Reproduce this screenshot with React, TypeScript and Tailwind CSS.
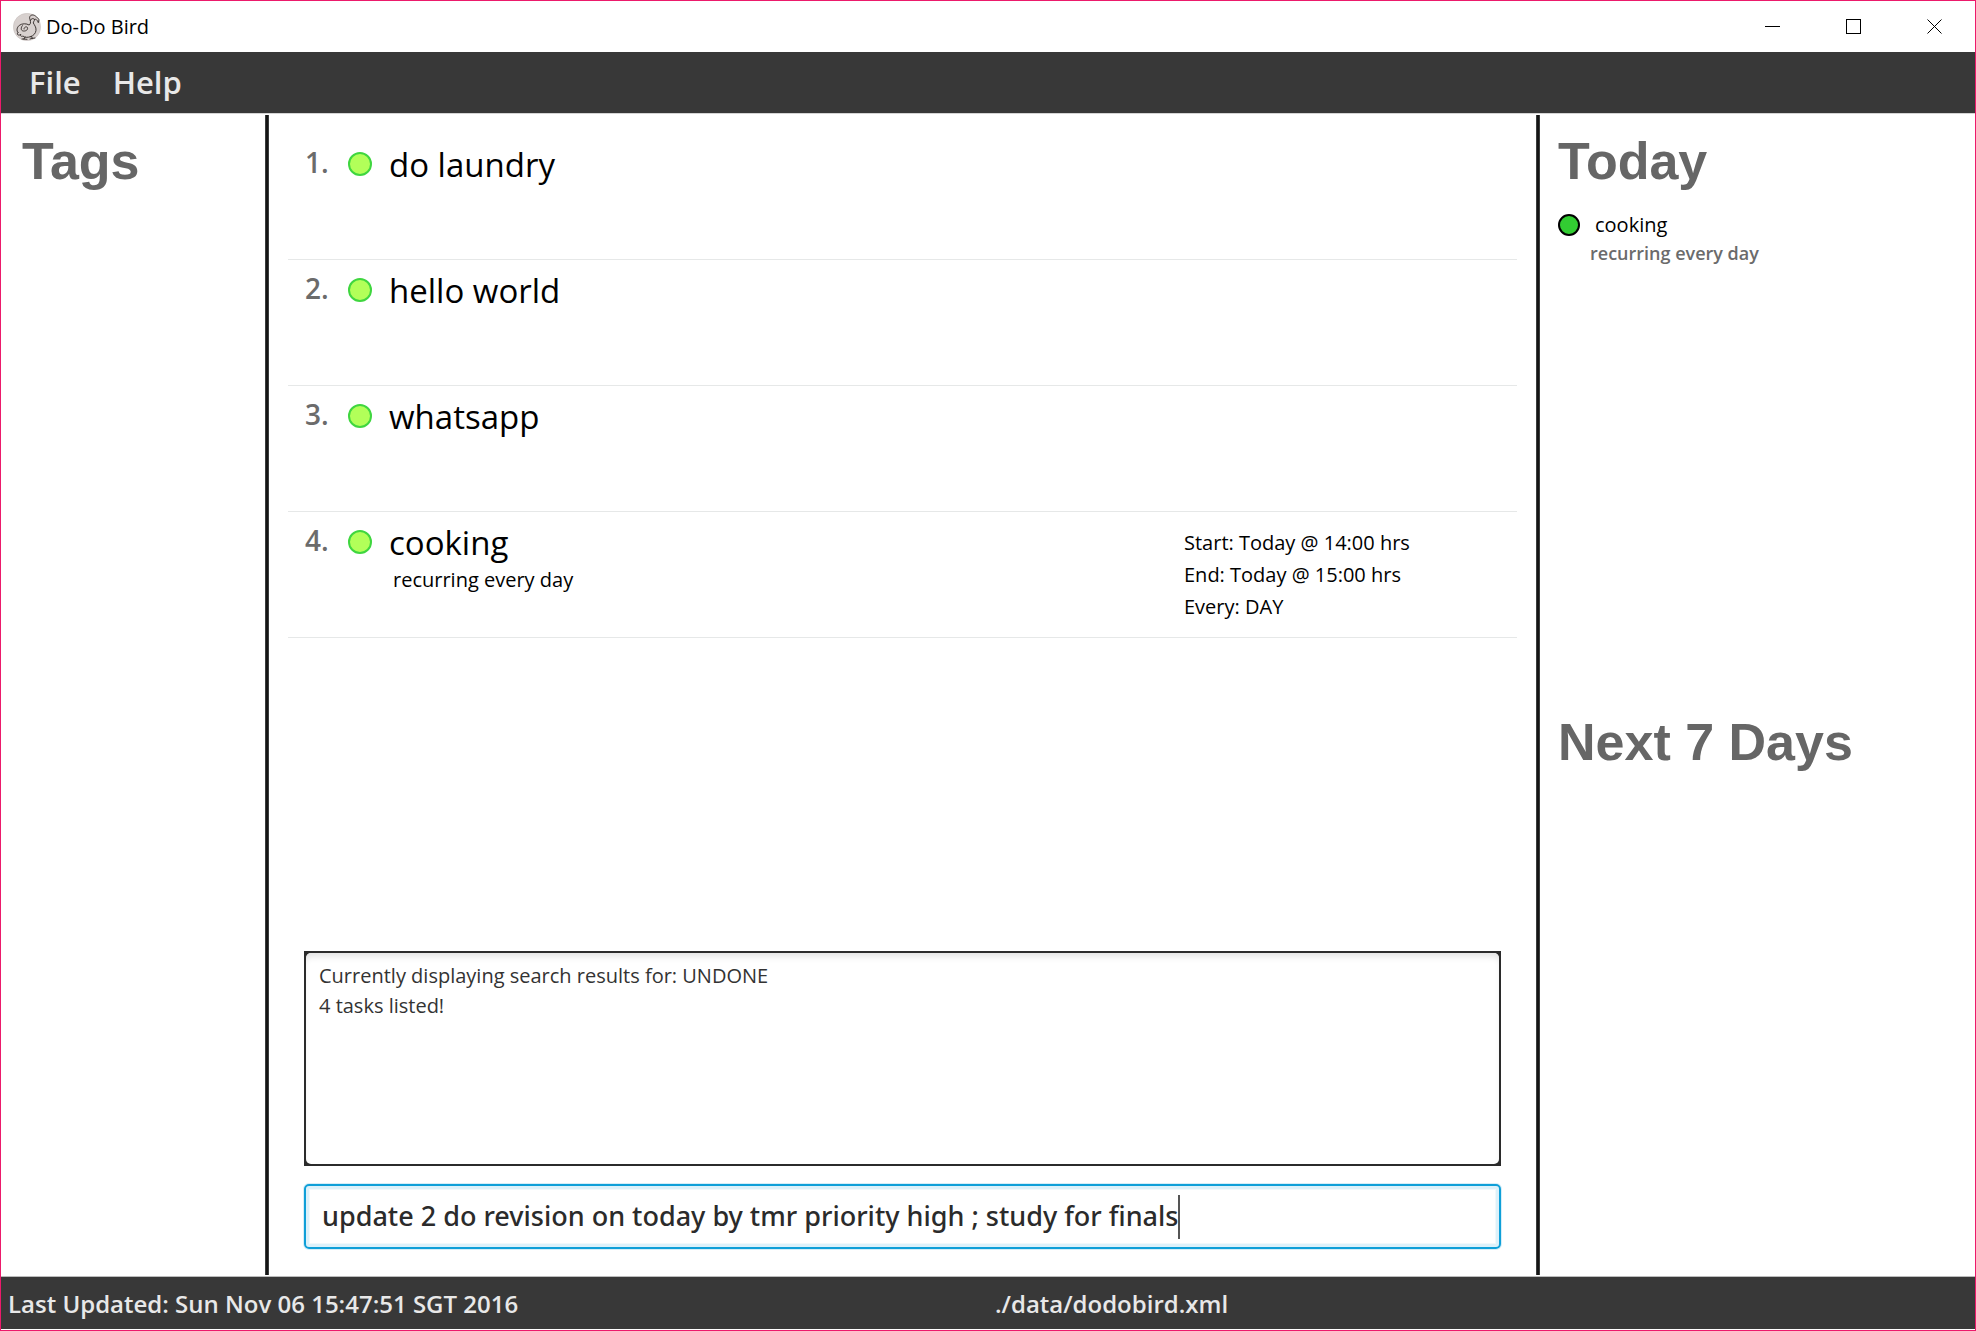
import type { ReactNode } from "react";

type Task = { title: string; note?: string; times?: string[] };

const tasks: Task[] = [
  { title: "do laundry" },
  { title: "hello world" },
  { title: "whatsapp" },
  {
    title: "cooking",
    note: "recurring every day",
    times: ["Start: Today @ 14:00 hrs", "End: Today @ 15:00 hrs", "Every: DAY"],
  },
];

function DodoLogo() {
  return (
    <svg className="size-7 shrink-0" viewBox="0 0 84 84" fill="none" aria-hidden="true">
      <circle cx="42" cy="42" r="41" fill="#d8d1cf" stroke="#c4bdbb" strokeWidth="1.5" />
      <g stroke="#3d3634" strokeWidth="3" strokeLinecap="round" strokeLinejoin="round">
        <path d="M52 22C46 12 52 5 61 6C67 7 70 12 73 14C78 17 80 22 76 28" />
        <path d="M52 22C55 16 61 15 64 19C66 23 60 26 61 30C64 36 70 42 69 52C68 61 62 68 53 71" />
        <path d="M64 19C69 17 72 20 76 28" />
        <path d="M52 22C53 29 53 34 48 36C41 31 27 31 19 37C11 44 10 53 15 59" />
        <path d="M28 38C23 44 23 53 31 54C40 55 46 49 43 43C39 39 32 44 33 48" />
        <path d="M15 59C12 60 12 65 16 66C19 67 23 65 24 63C20 68 25 72 30 69C34 74 44 74 53 71" />
        <path d="M36 72L33 78M33 78H27M33 78L42 79M55 70L58 76M58 76L66 75M58 76L51 78" />
      </g>
    </svg>
  );
}

function WindowButton({ label, children }: { label: string; children: ReactNode }) {
  return (
    <button type="button" aria-label={label} className="flex h-full w-[81px] items-center justify-center">
      <svg className="size-[15px]" viewBox="0 0 15 15" fill="none" stroke="#000" aria-hidden="true">
        {children}
      </svg>
    </button>
  );
}

function Heading({ children }: { children: ReactNode }) {
  return (
    <h2 className="pb-0.5 font-['Liberation_Sans',Arial,sans-serif] text-[52px] leading-[58px] font-bold text-[#666]">
      {children}
    </h2>
  );
}

function Divider() {
  return <div className="my-px border-x border-[#3a3d3d] bg-[#151515]" />;
}

function TaskRow({ task, index }: { task: Task; index: number }) {
  return (
    <li className="flex h-[126px] border-b border-[#e6e8e8] pt-2 pl-[17px]">
      <span className="w-[43px] text-[28px] leading-10 font-semibold text-[#6b6b6b]">{index}.</span>
      <span className="flex h-11 items-center">
        <span className="size-6 rounded-full border-2 border-[#3fd63f] bg-[#b2ff59]" />
      </span>
      <div className="min-w-0 flex-1 pl-[17px]">
        <p className="text-[33px] leading-[46px]">{task.title}</p>
        {task.note && <p className="pl-1 text-[20px] leading-7">{task.note}</p>}
      </div>
      {task.times && (
        <div className="w-[333px] pt-[7px] text-[20px] leading-8">
          {task.times.map((line) => (
            <p key={line}>{line}</p>
          ))}
        </div>
      )}
    </li>
  );
}

export default function App() {
  return (
    <div className="flex min-h-screen flex-col border border-[#ec1a6b] bg-white font-['Open_Sans','Segoe_UI',sans-serif] text-black">
      <header className="flex h-[51px] items-center pl-3">
        <DodoLogo />
        <h1 className="flex-1 pl-[5px] text-[20px]">Do-Do Bird</h1>
        <WindowButton label="Minimize">
          <path d="M0 7.5H15" />
        </WindowButton>
        <WindowButton label="Maximize">
          <rect x="0.5" y="0.5" width="14" height="14" />
        </WindowButton>
        <WindowButton label="Close">
          <path d="M0.5 0.5L14.5 14.5M14.5 0.5L0.5 14.5" />
        </WindowButton>
      </header>

      <nav className="flex h-[62px] items-center gap-8 border-b border-[#d4d4d4] bg-[#383838] pl-7 text-[31px] font-semibold text-[#e8e8e8]">
        <button type="button">File</button>
        <button type="button">Help</button>
      </nav>

      <main className="grid flex-1 grid-cols-[264px_4px_1fr_4px_435px]">
        <aside className="pt-[18px] pl-[21px]">
          <Heading>Tags</Heading>
        </aside>
        <Divider />
        <section className="flex flex-col px-[19px] pt-5 pb-[27px]">
          <ol className="flex-1">
            {tasks.map((task, i) => (
              <TaskRow key={task.title} task={task} index={i + 1} />
            ))}
          </ol>
          <div className="flex flex-col gap-[18px] px-4">
            <div className="flex bg-[#2b2b2b] p-0.5">
              <textarea
                readOnly
                rows={7}
                aria-label="Result"
                className="h-[211px] flex-1 resize-none rounded-[5px] bg-white px-[13px] pt-2 text-[20px] leading-[30px] text-[#333] shadow-[inset_0_6px_6px_-2px_#e4e4e4] outline-none"
                value={"Currently displaying search results for: UNDONE\n4 tasks listed!"}
              />
            </div>
            <label className="flex h-[65px] cursor-text items-center rounded-[5px] border-2 border-[#0f9fd8] px-4 shadow-[0_0_0_1px_#d5eef8,inset_0_0_0_3px_#dcf1fa,inset_0_0_0_4px_#f1f8fb]">
              <input
                type="text"
                aria-label="Command"
                className="field-sizing-content max-w-full font-['Noto_Sans','Segoe_UI',sans-serif] text-[27px] font-medium text-[#2b2b2b] outline-none"
                defaultValue="update 2 do revision on today by tmr priority high ; study for finals"
              />
              <span className="h-11 w-0.5 bg-[#555]" />
            </label>
          </div>
        </section>
        <Divider />
        <aside className="grid grid-rows-2 pl-[18px]">
          <section className="pt-[18px]">
            <Heading>Today</Heading>
            <div className="flex items-center gap-[15px] pt-[19px]">
              <span className="size-[22px] rounded-full border-2 border-black bg-[#32cd32]" />
              <p className="text-[20px] leading-7">cooking</p>
            </div>
            <p className="pl-8 text-[18px] leading-7 font-semibold text-[#6b6b6b]">recurring every day</p>
          </section>
          <section className="pt-[18px]">
            <Heading>Next 7 Days</Heading>
          </section>
        </aside>
      </main>

      <footer className="mb-px grid h-[53px] grid-cols-2 items-center border-t border-[#bbb] bg-[#383838] pt-0.5 text-[24px] font-semibold text-[#e8e8e8]">
        <span className="pl-[7px]">Last Updated: Sun Nov 06 15:47:51 SGT 2016</span>
        <span className="pl-[7px]">./data/dodobird.xml</span>
      </footer>
    </div>
  );
}
